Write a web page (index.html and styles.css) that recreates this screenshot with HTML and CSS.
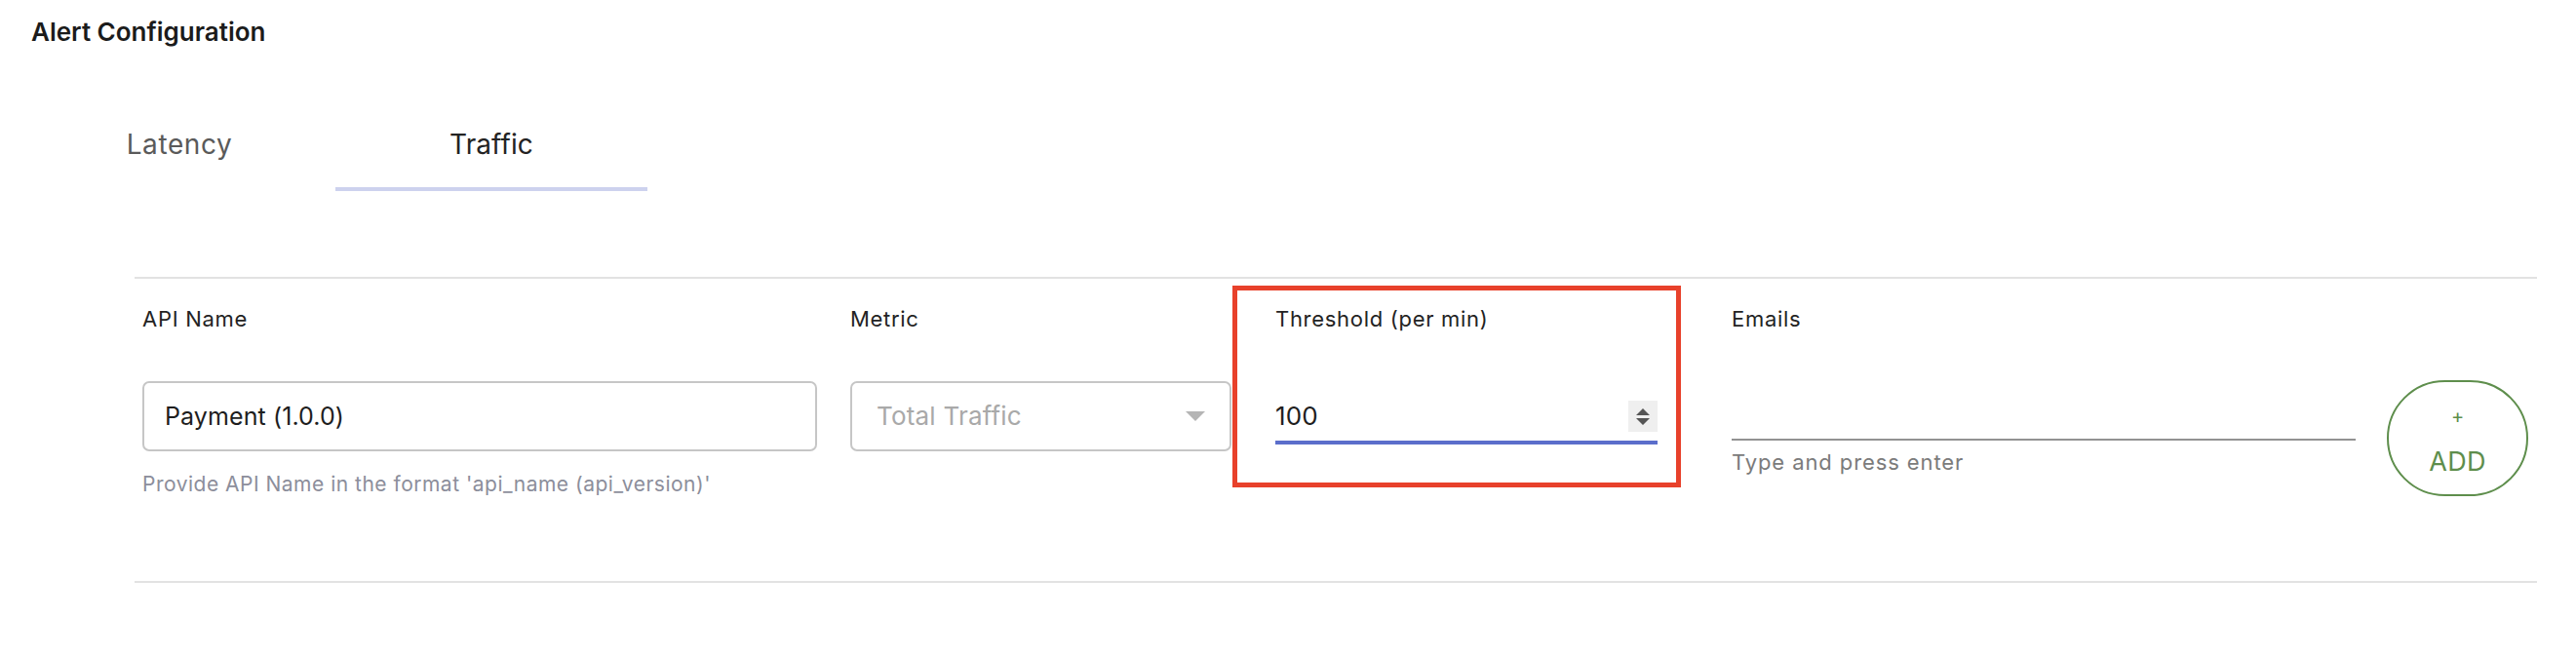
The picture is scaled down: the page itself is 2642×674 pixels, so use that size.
FILE: index.html
```html
<!DOCTYPE html>
<html lang="en">
<head>
<meta charset="utf-8">
<title>Alert Configuration</title>
<link rel="stylesheet" href="styles.css">
</head>
<body>
<div class="page">
  <h1 class="title">Alert Configuration</h1>
  <div class="tabs">
    <div class="tab">Latency</div>
    <div class="tab tab-active">Traffic</div>
  </div>
  <div class="section">
    <div class="row">
      <div class="col col-api">
        <div class="label">API Name</div>
        <div class="box-input"><span class="value">Payment (1.0.0)</span></div>
        <div class="hint">Provide API Name in the format 'api_name (api_version)'</div>
      </div>
      <div class="col col-metric">
        <div class="label">Metric</div>
        <div class="box-input select">
          <span class="placeholder">Total Traffic</span>
          <svg class="caret" width="20" height="10" viewBox="0 0 20 10"><path d="M0 0 H20 L10 10 Z" fill="#b5b5b5"/></svg>
        </div>
      </div>
      <div class="col col-threshold">
        <div class="highlight"></div>
        <div class="label">Threshold (per min)</div>
        <div class="line-input focused">
          <span class="value">100</span>
          <span class="spinner">
            <svg width="16" height="24" viewBox="0 0 16 24"><path d="M1 11 L8 4 L15 11 Z M1 14 H15 L8 21 Z" fill="#555"/></svg>
          </span>
        </div>
      </div>
      <div class="col col-emails">
        <div class="label">Emails</div>
        <div class="line-input plain"></div>
        <div class="hint hint-gray">Type and press enter</div>
      </div>
      <div class="col col-add">
        <button class="add-btn"><span class="plus">+</span><span class="add-text">ADD</span></button>
      </div>
    </div>
  </div>
</div>
</body>
</html>
```
FILE: styles.css
```css
* { box-sizing: border-box; }
html, body { margin: 0; padding: 0; background: #fff; }
body { font-family: Inter, "Open Sans", Lato, sans-serif; color: #222; }

.page { padding-top: 17px; }

.title {
  margin: 0 0 0 32px;
  font-size: 26px;
  line-height: 32px;
  font-weight: 600;
  color: #1b1b1b;
}

.tabs {
  display: flex;
  margin: 58px 0 0 24px;
}
.tab {
  width: 320px;
  padding: 24px 0 27px;
  font-size: 28px;
  line-height: 34px;
  text-align: center;
  color: #5a5a5a;
  letter-spacing: 0.6px;
  border-bottom: 4px solid transparent;
}
.tab-active {
  color: #232323;
  letter-spacing: 0.1px;
  border-bottom-color: #cdd2ee;
}

.section {
  margin: 88px 40px 0 138px;
  border-top: 2px solid #e2e2e2;
  border-bottom: 2px solid #e2e2e2;
}

.row {
  display: flex;
  align-items: flex-start;
  padding: 27px 0 87px 8px;
}
.col { display: flex; flex-direction: column; align-items: flex-start; }
.col-api { width: 726px; }
.col-metric { width: 436px; }
.col-threshold { width: 468px; position: relative; }
.col-emails { width: 672px; }
.col-add { width: 145px; padding-top: 77px; }

.label {
  font-size: 22px;
  line-height: 28px;
  letter-spacing: 0.7px;
  color: #232323;
  margin-bottom: 50px;
}

.box-input {
  height: 72px;
  border: 2px solid #c6c6c6;
  border-radius: 7px;
  display: flex;
  align-items: center;
  padding: 0 21px;
  font-size: 25px;
  line-height: 32px;
}
.col-api .box-input { width: 692px; }
.select { width: 391px; padding: 0 25px; justify-content: space-between; font-size: 26px; }
.value { color: #1e1e1e; letter-spacing: 0.1px; }
.placeholder { color: #a9a9a9; letter-spacing: 0.2px; }
.caret { flex: none; }

.hint {
  margin-top: 22px;
  font-size: 21px;
  line-height: 24px;
  color: #8c8e9b;
  letter-spacing: 0.5px;
}

.line-input {
  width: 392px;
  height: 65px;
  display: flex;
  align-items: flex-end;
  justify-content: space-between;
  padding-bottom: 9px;
  font-size: 26px;
  line-height: 32px;
}
.focused { border-bottom: 4px solid #5b6ecb; }
.spinner {
  width: 30px;
  height: 32px;
  background: #efefef;
  display: flex;
  align-items: center;
  justify-content: center;
}
.spinner svg { display: block; }

.plain {
  width: 640px;
  height: 61px;
  border-bottom: 2px solid #929292;
  padding: 0;
}
.hint-gray {
  margin-top: 8px;
  font-size: 22px;
  line-height: 28px;
  color: #7b7b7b;
  letter-spacing: 0.9px;
}

.highlight {
  position: absolute;
  left: -44px;
  top: -20px;
  width: 460px;
  height: 207px;
  border: 5px solid #e8412b;
  pointer-events: none;
}

.add-btn {
  width: 145px;
  height: 119px;
  border: 2px solid #5e8e4c;
  border-radius: 60px;
  background: #fff;
  color: #5e8e4c;
  font-family: inherit;
  display: flex;
  flex-direction: column;
  align-items: center;
  justify-content: center;
  gap: 19px;
  padding: 6px 0 0;
  cursor: pointer;
}
.plus { font-size: 20px; line-height: 24px; }
.add-text { font-size: 27px; line-height: 32px; letter-spacing: 0.3px; }
```
